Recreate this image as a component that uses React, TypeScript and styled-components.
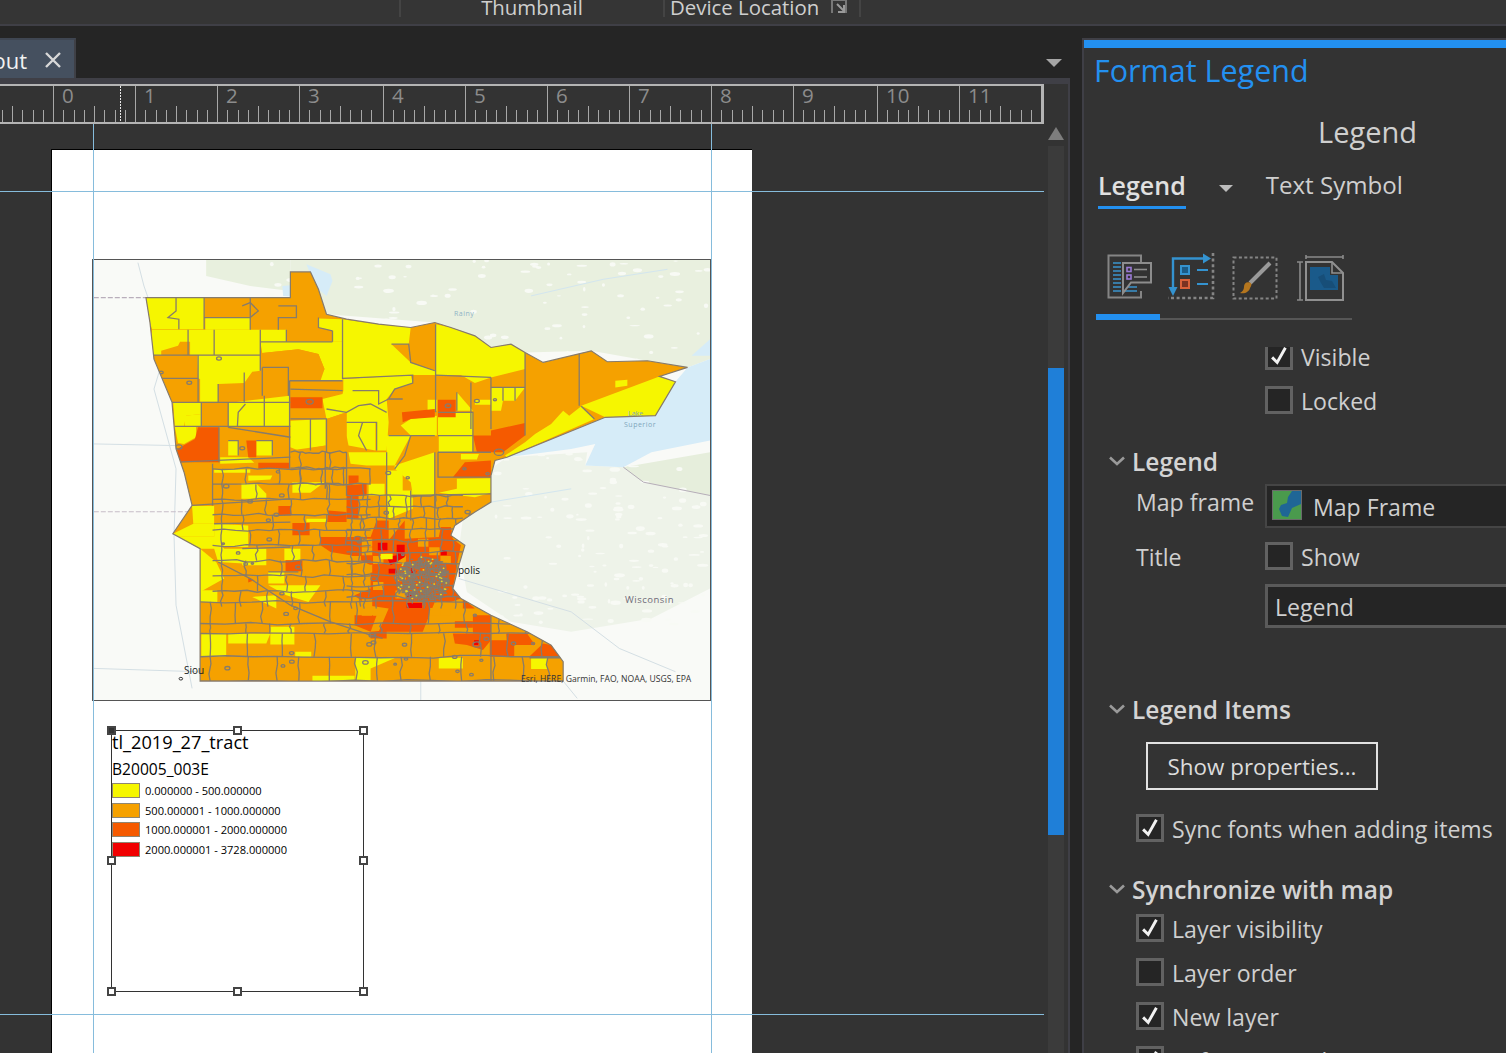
import React from "react";
import styled, { createGlobalStyle } from "styled-components";

const UI_FONT = `"Open Sans", "Noto Sans", sans-serif`;

const GlobalStyle = createGlobalStyle`
  html, body {
    margin: 0;
    padding: 0;
    background: #252525;
    overflow: hidden;
  }
  * {
    box-sizing: border-box;
  }
`;

// seeded so the map is the same on every load
let seed = 20191;
function rnd() {
  seed = (seed * 16807) % 2147483647;
  return seed / 2147483647;
}

function wiggle(x1: number, y1: number, x2: number, y2: number, amp = 3, n = 4) {
  const pts: string[] = [`${x1},${y1}`];
  for (let i = 1; i < n; i++) {
    const t = i / n;
    const x = x1 + (x2 - x1) * t + (rnd() - 0.5) * amp * 2;
    const y = y1 + (y2 - y1) * t + (rnd() - 0.5) * amp * 2;
    pts.push(`${x.toFixed(0)},${y.toFixed(0)}`);
  }
  pts.push(`${x2},${y2}`);
  return pts.join(" ");
}

const STATE =
  "140,125 500,125 500,48 550,48 570,100 590,175 640,190 720,205 800,215 860,200 900,215 960,240 1000,275 1050,265 1085,290 1130,320 1250,285 1290,318 1390,315 1490,335 1420,362 1460,378 1410,480 1285,485 1040,605 1010,615 1000,660 1000,740 960,770 910,810 900,840 935,870 920,930 905,1000 925,1030 1000,1080 1090,1130 1150,1170 1180,1220 1180,1278 275,1278 275,880 207,835 255,750 235,650 215,580 205,440 160,310 150,200";

const YELLOW = [
  "140,125 285,125 285,220 155,220 150,200",
  "288,185 400,185 400,222 288,222",
  "155,222 425,222 425,298 155,298",
  "268,298 425,298 425,345 405,348 385,382 320,385 270,368",
  "275,370 320,370 320,438 275,438",
  "490,258 630,258 630,375 575,375 585,340 570,295 520,280 430,292 425,258",
  "570,188 630,190 630,258 605,258 605,225 570,215",
  "425,222 490,222 490,258 425,258",
  "630,190 720,205 800,215 795,265 752,265 800,320 860,345 862,358 805,358 630,368",
  "862,205 900,215 960,240 1000,275 1050,265 1085,290 1085,340 1000,365 960,382 925,358 862,358",
  "632,370 800,358 805,382 760,400 740,430 745,500 740,585 715,585 715,500 640,500 640,470 590,490 580,430 630,415 632,405",
  "800,490 865,480 865,540 800,540 775,510",
  "868,470 955,470 955,540 868,540",
  "915,410 955,465 915,465",
  "842,432 865,432 865,465 842,465",
  "1000,395 1085,395 1060,435 1030,435 1025,465 1000,465",
  "960,432 1000,432 1000,447 960,447",
  "1310,375 1340,372 1340,390 1310,395",
  "1420,362 1460,378 1410,480 1285,485 1225,450",
  "1225,452 1258,490 1040,605 1035,600 1085,560 1110,535 1150,505 1180,465 1195,480",
  "208,442 278,442 278,475 240,480 235,512 212,512",
  "237,480 278,475 278,512 237,512",
  "212,514 265,514 265,545 235,565 220,562",
  "345,442 498,420 498,512 345,512",
  "500,495 588,490 588,570 520,585 500,575",
  "640,495 712,495 712,585 645,570 640,540",
  "645,590 740,590 740,630 690,630 650,625",
  "740,540 800,540 760,630 740,630",
  "760,630 860,590 860,720 805,718 800,680 760,640",
  "740,645 780,645 780,705 805,705 805,760 745,790 740,720",
  "870,540 955,540 955,590 870,590",
  "925,595 970,595 965,612 925,612",
  "915,670 1000,668 1000,712 960,725 870,712 915,700",
  "345,555 370,555 370,600 345,600",
  "415,555 455,555 455,600 415,600",
  "325,605 395,605 410,622 325,625",
  "310,642 400,642 400,652 310,652",
  "395,660 455,660 450,672 395,676",
  "378,684 415,684 440,715 440,730 378,730",
  "505,680 585,680 550,712 505,712",
  "695,685 735,685 735,720 695,720",
  "255,752 310,752 310,805 258,805",
  "207,835 258,805 310,805 310,843 215,843",
  "210,843 310,843 335,880 395,880 395,925 320,920 310,880 275,880",
  "275,880 315,920 335,970 275,1010",
  "275,1005 318,1005 318,1040 275,1040",
  "310,805 395,810 395,875 310,875",
  "380,880 440,880 440,930 380,930",
  "485,880 525,880 525,915 485,915",
  "445,950 485,950 485,985 445,985",
  "445,990 575,990 545,1040 490,1020",
  "405,1025 465,1020 465,1060",
  "278,1135 340,1135 340,1205 278,1205",
  "345,1135 450,1135 440,1165 345,1165",
  "450,1115 510,1115 510,1168 450,1168",
  "512,1190 552,1190 552,1205 512,1205",
  "662,1208 762,1208 700,1240 700,1278 662,1278",
  "870,1208 930,1208 930,1240 870,1240",
  "1100,1208 1140,1208 1140,1242 1100,1242",
  "555,1262 660,1262 660,1278 555,1278",
  "540,790 590,790 590,800 540,800",
];

// orange put back over the yellow blocks above
const ORANGE = [
  "178,285 220,270 225,258 250,258 250,298 178,298",
  "430,292 520,280 570,295 585,340 570,375 495,375 495,340 430,345",
  "500,585 588,570 588,640 500,640",
  "590,490 640,470 640,590 590,590",
];

const DARK = [
  "500,425 580,425 580,458 500,458",
  "270,515 322,515 322,620 218,620 218,580 262,550",
  "390,555 415,555 415,605 395,605",
  "420,622 498,622 498,640 420,640",
  "778,470 860,460 860,485 800,490 780,500",
  "868,432 912,432 912,485 868,485",
  "955,540 1000,540 1000,525 1085,502 1085,540 1030,590 965,590",
  "905,665 935,620 1000,615 1000,665",
  "645,660 670,660 670,680 645,690",
  "638,690 690,685 690,720 670,720 670,790 640,790 640,720",
  "595,765 640,770 640,800 592,800",
  "470,752 502,752 502,780 470,780",
  "505,803 548,803 548,840 505,840",
  "488,915 530,915 530,948 488,948",
  "575,845 700,845 715,795 745,795 745,855 785,795 785,850 870,845 875,815 900,815 905,850 925,870 915,930 905,1000 925,1030 900,1040 860,1040 830,1130 720,1130 745,1060 690,1050 660,1020 700,1000 700,930 650,900 600,890 575,870",
  "660,1080 715,1080 700,1130 660,1110",
  "700,1130 740,1125 740,1150 700,1150",
  "910,1098 955,1098 955,1118 910,1118",
  "955,1080 1000,1080 1000,1135 955,1135",
  "905,1135 1000,1135 1000,1155 980,1185 940,1170 910,1165",
  "997,1155 1058,1155 1058,1205 997,1205",
  "1038,1135 1090,1135 1110,1170 1040,1170",
  "1095,1205 1130,1165 1150,1170 1172,1205",
  "930,1030 960,1060 930,1060",
  "395,968 410,975 395,982",
];

const RED = [
  "718,862 742,862 742,885 718,885",
  "765,868 785,868 785,905 750,930 740,905 765,900",
  "875,885 890,885 890,900 875,900",
  "790,1043 828,1043 828,1058 790,1058",
  "745,940 765,940 765,955 745,955",
  "800,935 815,950 800,955",
  "795,1010 805,1020 790,1025",
  "958,1155 970,1155 968,1170 958,1170",
];

const HAND_LINES = [
  "285,125 285,220",
  "285,185 400,185",
  "400,125 400,222",
  "470,150 515,150 515,185 470,185 470,222",
  "215,125 215,165 195,185 222,190 222,220",
  "380,150 400,140 420,165 400,185",
  "245,222 245,298",
  "310,222 310,298",
  "425,222 425,345",
  "490,222 490,258",
  "425,258 605,258",
  "605,225 605,258",
  "570,185 570,215 605,225",
  "630,190 630,370",
  "630,368 805,358 805,382 760,400 745,430",
  "752,265 795,265 800,320 860,345",
  "862,205 862,470",
  "862,358 1000,365",
  "1000,365 1000,520",
  "1085,290 1085,540",
  "1220,295 1220,450",
  "1225,452 1258,490",
  "1000,395 1085,395",
  "1030,395 1030,435",
  "1060,395 1060,435",
  "155,298 425,298",
  "270,298 270,440",
  "180,368 270,368",
  "205,440 500,440",
  "320,385 320,440",
  "385,350 385,440",
  "430,335 495,335 495,420",
  "430,335 430,420",
  "345,440 345,515",
  "278,440 278,515",
  "388,445 370,470 368,512",
  "435,420 435,512",
  "212,512 500,512",
  "498,375 498,640",
  "498,375 630,375",
  "500,400 630,405",
  "500,490 590,490 590,590",
  "550,490 550,585",
  "590,460 640,470 670,450 700,445 740,470",
  "655,405 720,405 720,445 745,430",
  "640,500 715,500 715,585",
  "680,500 670,540 690,585",
  "745,540 860,540",
  "800,540 785,600 760,640",
  "868,470 955,470 955,590",
  "868,590 1000,590",
  "868,540 955,540",
  "868,590 868,665 1000,665",
  "915,410 915,465",
  "745,430 780,430",
  "950,380 950,520",
  "322,515 322,620",
  "218,620 500,605",
  "345,555 370,555 370,600",
  "415,555 455,555 455,600",
  "345,515 500,545",
  "306,625 306,750",
  "255,750 500,730",
  "310,805 500,800",
  "640,590 640,720",
  "740,590 740,790",
  "800,705 800,795",
  "860,590 860,845",
  "587,590 587,700",
  "800,720 1000,715",
  "320,920 400,970 500,1050 600,1100 700,1140 730,1150",
  "380,880 500,875",
  "445,950 520,950",
  "1000,1080 1000,1278",
  "1096,1208 1180,1208",
];

const GENERATED_LINES: string[] = [];
const CITY_BLOBS: [number, number, number][] = [];
const ORANGE_CELLS: string[] = [];

function addBand(x0: number, x1: number, y0: number, y1: number, minW: number, maxW: number) {
  GENERATED_LINES.push(wiggle(x0, y0, x1, y0, 4, 14));
  let x = x0 + minW * 0.5;
  while (x < x1) {
    GENERATED_LINES.push(wiggle(Math.round(x), y0, Math.round(x), y1, 4, 3));
    x += minW + rnd() * (maxW - minW);
  }
}

[1040, 1105, 1135, 1205].forEach((y, i, list) => {
  addBand(275, 1180, y, list[i + 1] ?? 1278, 50, 95);
});
addBand(275, 1180, 1278, 1280, 2000, 2000);
for (let y = 640; y < 1040; y += 46) addBand(306, 700, y, y + 46, 46, 95);
for (let y = 720; y < 1040; y += 34) addBand(640, 930, y, y + 34, 26, 44);
for (let y = 590; y < 700; y += 48) addBand(500, 640, y, y + 48, 50, 80);

for (let x = 650; x < 900; x += 28) {
  for (let y = 850; y < 1060; y += 26) {
    const inMetro = Math.hypot((x - 830) / 70, (y - 975) / 75) < 1;
    if (!inMetro && rnd() < 0.3) {
      ORANGE_CELLS.push(`${x},${y} ${x + 26},${y} ${x + 26},${y + 24} ${x},${y + 24}`);
    }
  }
}

for (let i = 0; i < 46; i++) {
  CITY_BLOBS.push([300 + rnd() * 780, 620 + rnd() * 640, 3 + rnd() * 4]);
}
const TOWNS: [number, number, number][] = [
  [322, 308, 6], [178, 350, 5], [248, 381, 6], [548, 438, 9], [222, 574, 8], [380, 578, 6], [340, 692, 7],
  [465, 778, 6], [668, 850, 9], [893, 450, 7], [1020, 590, 12], [965, 436, 6], [1010, 432, 4], [520, 935, 7],
  [703, 1140, 7], [965, 1168, 10], [1105, 1165, 4], [960, 1080, 4],
];

const METRO_LINES: string[] = [];
const METRO_DOTS: [number, number][] = [];
for (let i = 0; i < 560; i++) {
  const a = rnd() * Math.PI * 2;
  const r = Math.sqrt(rnd());
  const x = 828 + Math.cos(a) * r * 66;
  const y = 972 + Math.sin(a) * r * 68;
  const len = 5 + rnd() * 10;
  const horizontal = rnd() < 0.5;
  METRO_LINES.push(
    `${x.toFixed(0)},${y.toFixed(0)} ${(x + (horizontal ? len : 0)).toFixed(0)},${(y + (horizontal ? 0 : len)).toFixed(0)}`,
  );
  if (i % 14 === 0) METRO_DOTS.push([x, y]);
}

const SPECKS: [number, number, number, number][] = [];
for (let i = 0; i < 240; i++) {
  const north = i < 110;
  SPECKS.push([
    north ? 300 + rnd() * 1240 : 1010 + rnd() * 530,
    north ? 14 + rnd() * 300 : 590 + rnd() * 520,
    3 + rnd() * 11,
    2 + rnd() * 5,
  ]);
}

const LAKE =
  "1490,335 1546,310 1546,555 1400,590 1330,635 1235,630 1260,565 1200,580 1040,605 1285,485 1410,480 1460,378";

function MapDrawing() {
  return (
    <MapSvg viewBox="8 12 1538 1323" preserveAspectRatio="none">
      <defs>
        <clipPath id="state-clip">
          <polygon points={STATE} />
        </clipPath>
        <filter id="soft" x="0" y="0" width="100%" height="100%">
          <feGaussianBlur stdDeviation="1.6" />
        </filter>
        <filter id="softer" x="0" y="0" width="100%" height="100%">
          <feGaussianBlur stdDeviation="0.55" />
        </filter>
      </defs>

      <g filter="url(#soft)">
        <rect x="0" y="0" width="1560" height="1350" fill="#f9faf7" />
        <polygon points="290,12 500,12 500,105 400,90 290,60" fill="#e8f0de" />
        <polygon points="500,12 1546,12 1546,310 1490,335 1390,315 1250,285 1085,290 1000,275 860,200 590,175 550,48 500,48" fill="#e9f0df" />
        <polygon points="1000,640 1040,605 1240,590 1235,630 1330,635 1546,600 1546,1000 1400,1090 1200,1130 1050,1100 940,1010 920,880 930,790 1000,740" fill="#eef3e9" />
        <polygon points="1330,635 1546,590 1546,720 1380,680" fill="#e6eedc" />
        {SPECKS.map(([x, y, rx, ry], i) => (
          <ellipse key={i} cx={x} cy={y} rx={rx} ry={ry} fill="#f8faf5" />
        ))}
        <polygon points={LAKE} fill="#d6ecf8" />
        <polygon points="480,90 500,88 500,122 482,120" fill="#d6ecf8" />
        <polygon points="540,25 600,55 605,75 590,120 570,100 555,70" fill="#d6ecf8" />
        <polygon points="1500,300 1546,250 1546,300" fill="#d6ecf8" />
      </g>

      <g fill="none" stroke="#d4dfe4" strokeWidth="1">
        <polyline points="120,20 135,90 190,280 160,400 215,640 210,840 215,1050 255,1300" vectorEffect="non-scaling-stroke" />
        <polyline points="10,565 215,570" vectorEffect="non-scaling-stroke" />
        <polyline points="10,1240 270,1250" vectorEffect="non-scaling-stroke" />
        <polyline points="825,1278 825,1335" vectorEffect="non-scaling-stroke" />
        <polyline points="1180,1278 1215,1330" vectorEffect="non-scaling-stroke" />
        <polyline points="920,970 1200,1070 1320,1180 1460,1250" vectorEffect="non-scaling-stroke" />
        <polyline points="1000,740 1100,720 1200,700" stroke="#d3e6ef" vectorEffect="non-scaling-stroke" />
        <polyline points="1100,120 1280,70 1440,40" stroke="#d3e6ef" vectorEffect="non-scaling-stroke" />
      </g>
      <polyline points="10,125 140,125" fill="none" stroke="#b9aebb" strokeWidth="1.4" strokeDasharray="5 2" vectorEffect="non-scaling-stroke" />
      <polyline points="10,769 255,769" fill="none" stroke="#c6bdc8" strokeWidth="1.2" strokeDasharray="5 2" vectorEffect="non-scaling-stroke" />
      <polyline points="1330,635 1380,680 1546,720" fill="none" stroke="#b5adb8" strokeWidth="1" vectorEffect="non-scaling-stroke" />

      <g filter="url(#softer)">
        <polygon points={STATE} fill="#f5a100" />
        <g clipPath="url(#state-clip)">
          {YELLOW.map((p, i) => (
            <polygon key={i} points={p} fill="#f6f600" />
          ))}
          {ORANGE.map((p, i) => (
            <polygon key={i} points={p} fill="#f5a100" />
          ))}
          {DARK.map((p, i) => (
            <polygon key={i} points={p} fill="#f55a00" />
          ))}
          {ORANGE_CELLS.map((p, i) => (
            <polygon key={i} points={p} fill="#f5a100" />
          ))}
          {RED.map((p, i) => (
            <polygon key={i} points={p} fill="#f00000" />
          ))}
          <polygon points="725,895 755,895 755,912 725,912" fill="#f6f600" />
          <g fill="none" stroke="#867b6c" strokeWidth="1.3">
            {GENERATED_LINES.map((p, i) => (
              <polyline key={i} points={p} vectorEffect="non-scaling-stroke" />
            ))}
            {HAND_LINES.map((p, i) => (
              <polyline key={i} points={p} vectorEffect="non-scaling-stroke" />
            ))}
            {CITY_BLOBS.map(([x, y, r], i) => (
              <ellipse key={i} cx={x} cy={y} rx={r} ry={r * 0.8} vectorEffect="non-scaling-stroke" />
            ))}
            {TOWNS.map(([x, y, r], i) => (
              <ellipse key={i} cx={x} cy={y} rx={r} ry={r * 0.8} vectorEffect="non-scaling-stroke" />
            ))}
            {METRO_LINES.map((p, i) => (
              <polyline key={i} points={p} strokeWidth="1.35" vectorEffect="non-scaling-stroke" />
            ))}
          </g>
          {METRO_DOTS.map(([x, y], i) => (
            <circle key={i} cx={x} cy={y} r="2.5" fill="#e8d820" />
          ))}
        </g>
        <polygon points={STATE} fill="none" stroke="#867b6c" strokeWidth="1.2" vectorEffect="non-scaling-stroke" />
      </g>
      <ellipse cx="227" cy="1271" rx="4.5" ry="4" fill="#fff" stroke="#333" strokeWidth="1" vectorEffect="non-scaling-stroke" />
    </MapSvg>
  );
}

const MINOR_STEP = 10.25;
const INCHES = [53, 135, 217, 299, 383, 465, 547, 629, 711, 793, 877, 959];

function RulerDrawing() {
  const starts = [-29, ...INCHES];
  return (
    <svg width="1041" height="36" viewBox="0 86 1041 36">
      {starts.map((start) => (
        <g key={start} stroke="#a8a8a8" strokeWidth="1">
          {start >= 0 && <line x1={start + 0.5} y1="86" x2={start + 0.5} y2="122" />}
          {[1, 2, 3, 4, 5, 6, 7].map((i) => {
            const x = Math.round(start + i * MINOR_STEP) + 0.5;
            return <line key={i} x1={x} y1={i === 4 ? 106 : 110} x2={x} y2="122" />;
          })}
        </g>
      ))}
      {INCHES.map((start, i) => (
        <text key={start} x={start + 9} y="103" fontFamily={UI_FONT} fontSize="20.5" fill="#8c8c8c">
          {i}
        </text>
      ))}
      <line x1="120.5" y1="86" x2="120.5" y2="122" stroke="#e8e8e8" strokeWidth="1" strokeDasharray="2 1" />
    </svg>
  );
}

function CheckMark() {
  return (
    <svg width="24" height="24" viewBox="0 0 24 24" fill="none">
      <path d="M4.5 13.5 L10 19 L19 3" stroke="#f2f2f2" strokeWidth="3.2" />
    </svg>
  );
}

function Chevron() {
  return (
    <svg width="16" height="10" viewBox="0 0 16 10" fill="none">
      <path d="M1 1.5 L8 8 L15 1.5" stroke="#9a9a9a" strokeWidth="2.6" />
    </svg>
  );
}

function LegendIcon() {
  return (
    <svg width="52" height="52" viewBox="-1 0 52 52" fill="none">
      <path d="M37 17 V5.5 H4.5 V47.5 H37 V41" stroke="#858585" strokeWidth="2" />
      <g stroke="#3a8fc4" strokeWidth="1.6">
        {[13, 17, 21, 25, 29, 33, 37, 41].map((y) => (
          <line key={y} x1="9" y1={y} x2="17" y2={y} />
        ))}
        <line x1="24" y1="37" x2="33" y2="37" />
        <line x1="20" y1="41" x2="33" y2="41" />
      </g>
      <path d="M19 13 H47 V32.5 H27 L19 43 Z" fill="#333" stroke="#8d8d8d" strokeWidth="2" />
      <rect x="23" y="17.5" width="4" height="4" fill="#333" stroke="#9a7ad6" strokeWidth="1.6" />
      <rect x="23" y="25" width="4" height="4" fill="#333" stroke="#9a7ad6" strokeWidth="1.6" />
      <line x1="30" y1="19.5" x2="43" y2="19.5" stroke="#8d8d8d" strokeWidth="1.6" />
      <line x1="30" y1="27" x2="43" y2="27" stroke="#8d8d8d" strokeWidth="1.6" />
    </svg>
  );
}

function ItemsIcon() {
  return (
    <svg width="52" height="52" viewBox="0 0 52 52" fill="none">
      <path d="M47 3 V48 H2" stroke="#858585" strokeWidth="2.6" strokeDasharray="3 2.6" />
      <path d="M7 38 V8.5 H38" stroke="#3493d0" strokeWidth="2.4" />
      <path d="M37 3.5 L45 8.5 L37 13.5 Z" fill="#3493d0" />
      <path d="M2.5 37 H11.5 L7 46 Z" fill="#3493d0" />
      <rect x="15" y="16" width="8" height="8" fill="#1b5b87" stroke="#3493d0" strokeWidth="2" />
      <rect x="15" y="30" width="8" height="8" fill="#7a3222" stroke="#d9613a" strokeWidth="2" />
      <line x1="31" y1="20" x2="42" y2="20" stroke="#3493d0" strokeWidth="2" />
      <line x1="31" y1="34" x2="42" y2="34" stroke="#3493d0" strokeWidth="2" />
    </svg>
  );
}

function BrushIcon() {
  return (
    <svg width="52" height="52" viewBox="0 0 52 52" fill="none">
      <rect x="4.5" y="7.5" width="43" height="41" stroke="#858585" strokeWidth="2" strokeDasharray="3 2.4" />
      <path d="M41 13 L21 33" stroke="#9a9a9a" strokeWidth="4" />
      <path d="M22 33 C18 31 15 33 15 37 C15 40 13 42 11 43 C16 44 20 42 21 38 C22 36 23 35 22 33 Z" fill="#b5761e" />
    </svg>
  );
}

function FrameIcon() {
  return (
    <svg width="52" height="52" viewBox="-2 0 52 52" fill="none">
      <path d="M12 5 V9 M12 7 H49 M49 5 V9" stroke="#8a8a8a" strokeWidth="1.6" />
      <path d="M3 12 H9 M6 12 V50 M3 50 H9" stroke="#8a8a8a" strokeWidth="1.6" />
      <path d="M12 12 H38 L49 23 V50 H12 Z" stroke="#909090" strokeWidth="2" />
      <path d="M38 12 V23 H49" stroke="#909090" strokeWidth="1.6" />
      <path d="M16 17 H36 V25 H44 V40 H16 Z" fill="#1a5a8a" />
      <path d="M24 27 L30 24 L32 30 L38 31 L42 38 L30 38 L27 33 Z" fill="#174e78" />
    </svg>
  );
}

function FrameSwatch() {
  return (
    <svg width="28" height="28" viewBox="0 0 28 28">
      <rect width="28" height="28" fill="#4a9a4d" />
      <path d="M19 0 H28 V13 L19 17 L15 26 L9 25 L6 18 L8 14 L14 12 L15 6 Z" fill="#1f6696" />
    </svg>
  );
}

export default function App() {
  return (
    <>
      <GlobalStyle />
      <Screen>
        <TopBar>
          <TopCell $width={264}>Thumbnail</TopCell>
          <TopCell $width={198} $pad>
            Device Location
            <DialogLauncher width="16" height="15" viewBox="0 0 16 15" fill="none">
              <path d="M1 14 V1 H15 V14" stroke="#777" strokeWidth="2" />
              <path d="M6 5 L13 12 M13 6 V13 H7" stroke="#9a9a9a" strokeWidth="2" />
            </DialogLauncher>
          </TopCell>
        </TopBar>

        <Workspace>
          <LeftColumn>
            <TabStrip>
              <Tab>
                Layout
                <TabClose width="18" height="18" viewBox="0 0 18 18" fill="none">
                  <path d="M2 2 L16 16 M16 2 L2 16" stroke="#d8d8d8" strokeWidth="2.4" />
                </TabClose>
              </Tab>
              <TabMenu />
            </TabStrip>

            <ViewFrame>
              <ViewColumn>
                <Ruler>
                  <RulerDrawing />
                </Ruler>
                <Canvas>
                  <Page>
                    <MapFrame>
                      <MapDrawing />
                      <MapLabel $x={365} $y={304} $size={10} $color="#111">polis</MapLabel>
                      <MapLabel $x={91} $y={404} $size={10} $color="#222">Siou</MapLabel>
                      <MapLabel $x={361} $y={50} $size={7} $color="#8fb3c6" $bold>Rainy</MapLabel>
                      <MapLabel $x={535} $y={150} $size={7} $color="#7fa6bb">Lake</MapLabel>
                      <MapLabel $x={531} $y={161} $size={7} $color="#7fa6bb" $bold>Superior</MapLabel>
                      <MapLabel $x={532} $y={334} $size={9.5} $color="#6f6a78" $bold>Wisconsin</MapLabel>
                      <MapLabel $x={428} $y={414} $size={8.6} $color="#333">
                        Esri, HERE, Garmin, FAO, NOAA, USGS, EPA
                      </MapLabel>
                    </MapFrame>

                    <LegendBox>
                      <Handle $x="left" $y="top" $solid />
                      <Handle $x="mid" $y="top" />
                      <Handle $x="right" $y="top" />
                      <Handle $x="left" $y="mid" />
                      <Handle $x="right" $y="mid" />
                      <Handle $x="left" $y="bottom" />
                      <Handle $x="mid" $y="bottom" />
                      <Handle $x="right" $y="bottom" />
                      <LegendTitle>tl_2019_27_tract</LegendTitle>
                      <LegendField>B20005_003E</LegendField>
                      <LegendRow>
                        <Swatch $color="#f6f600" />
                        0.000000 - 500.000000
                      </LegendRow>
                      <LegendRow>
                        <Swatch $color="#f5a100" />
                        500.000001 - 1000.000000
                      </LegendRow>
                      <LegendRow>
                        <Swatch $color="#f55a00" />
                        1000.000001 - 2000.000000
                      </LegendRow>
                      <LegendRow>
                        <Swatch $color="#f00000" />
                        2000.000001 - 3728.000000
                      </LegendRow>
                    </LegendBox>
                  </Page>
                  <GuideV $x={93} />
                  <GuideV $x={711} />
                  <GuideH $y={67} />
                  <GuideH $y={890} />
                </Canvas>
              </ViewColumn>

              <ScrollColumn>
                <ScrollUp />
                <ScrollTrack>
                  <ScrollThumb />
                </ScrollTrack>
              </ScrollColumn>
            </ViewFrame>
          </LeftColumn>

          <Panel>
            <PanelTitle>Format Legend</PanelTitle>
            <PanelSubject>Legend</PanelSubject>
            <ElementTabs>
              <ElementTab>Legend</ElementTab>
              <TabCaret />
              <ElementOther>Text Symbol</ElementOther>
            </ElementTabs>
            <IconTabs>
              <LegendIcon />
              <ItemsIcon />
              <BrushIcon />
              <FrameIcon />
            </IconTabs>
            <IconTabsRule />

            <PropertyPane>
              <CheckRow $indent={181} $top={-5}>
                <CheckBox $checked>
                  <CheckMark />
                </CheckBox>
                Visible
              </CheckRow>
              <CheckRow $indent={181} $top={16}>
                <CheckBox />
                Locked
              </CheckRow>

              <SectionHead $top={32}>
                <Chevron />
                Legend
              </SectionHead>
              <FieldRow $top={6}>
                <FieldLabel $lineHeight={36}>Map frame</FieldLabel>
                <Combo>
                  <SwatchFrame>
                    <FrameSwatch />
                  </SwatchFrame>
                  Map Frame
                </Combo>
              </FieldRow>
              <FieldRow $top={14}>
                <FieldLabel $lineHeight={30}>Title</FieldLabel>
                <CheckRow $indent={0} $top={0}>
                  <CheckBox />
                  Show
                </CheckRow>
              </FieldRow>
              <TextInput>Legend</TextInput>

              <SectionHead $top={66}>
                <Chevron />
                Legend Items
              </SectionHead>
              <OutlineButton>Show properties...</OutlineButton>
              <CheckRow $indent={52} $top={24}>
                <CheckBox $checked>
                  <CheckMark />
                </CheckBox>
                Sync fonts when adding items
              </CheckRow>

              <SectionHead $top={32}>
                <Chevron />
                Synchronize with map
              </SectionHead>
              <CheckRow $indent={52} $top={8}>
                <CheckBox $checked>
                  <CheckMark />
                </CheckBox>
                Layer visibility
              </CheckRow>
              <CheckRow $indent={52} $top={16}>
                <CheckBox />
                Layer order
              </CheckRow>
              <CheckRow $indent={52} $top={16}>
                <CheckBox $checked>
                  <CheckMark />
                </CheckBox>
                New layer
              </CheckRow>
              <CheckRow $indent={52} $top={16}>
                <CheckBox $checked>
                  <CheckMark />
                </CheckBox>
                Reference scale
              </CheckRow>
            </PropertyPane>
          </Panel>
        </Workspace>
      </Screen>
    </>
  );
}

const Screen = styled.div`
  width: 1506px;
  height: 1053px;
  display: flex;
  flex-direction: column;
  overflow: hidden;
  background: #252525;
  font-family: ${UI_FONT};
`;

const TopBar = styled.div`
  height: 26px;
  flex: none;
  display: flex;
  padding-left: 399px;
  background: #353535;
  border-bottom: 2px solid #3f3f46;
  overflow: hidden;
`;

const TopCell = styled.div<{ $width: number; $pad?: boolean }>`
  width: ${(p) => p.$width}px;
  height: 17px;
  display: flex;
  align-items: center;
  justify-content: ${(p) => (p.$pad ? "flex-start" : "center")};
  padding: 0 0 3px ${(p) => (p.$pad ? 5 : 0)}px;
  border-left: 2px solid #444;
  border-right: ${(p) => (p.$pad ? "2px solid #444" : "0")};
  color: #cfcfcf;
  font-size: 20.4px;
  line-height: 14px;
  white-space: nowrap;
`;

const DialogLauncher = styled.svg`
  margin-left: 12px;
  margin-top: -2px;
  flex: none;
`;

const Workspace = styled.div`
  flex: 1;
  display: flex;
  min-height: 0;
`;

const LeftColumn = styled.div`
  width: 1070px;
  flex: none;
  display: flex;
  flex-direction: column;
`;

const TabStrip = styled.div`
  height: 52px;
  flex: none;
  display: flex;
  justify-content: space-between;
  align-items: flex-end;
`;

const Tab = styled.div`
  width: 76px;
  height: 40px;
  display: flex;
  align-items: center;
  justify-content: flex-end;
  gap: 17px;
  padding: 2px 12px 0 0;
  overflow: hidden;
  white-space: nowrap;
  background: #45505f;
  border-top: 2px solid #3f4652;
  border-right: 2px solid #3f4046;
  color: #f2f2f2;
  font-size: 22px;
`;

const TabClose = styled.svg`
  flex: none;
`;

const TabMenu = styled.div`
  width: 0;
  height: 0;
  margin: 0 8px 11px 0;
  border-left: 8px solid transparent;
  border-right: 8px solid transparent;
  border-top: 8px solid #a6a6a6;
`;

const ViewFrame = styled.div`
  flex: 1;
  min-height: 0;
  display: flex;
  background: #333;
  border-top: 6px solid #3f3f46;
  border-right: 2px solid #3f3f46;
`;

const ViewColumn = styled.div`
  width: 1044px;
  flex: none;
  display: flex;
  flex-direction: column;
`;

const Ruler = styled.div`
  height: 40px;
  flex: none;
  display: flex;
  background: #333;
  border-top: 2px solid #b4b4b4;
  border-bottom: 2px solid #b4b4b4;
  border-right: 3px solid #b4b4b4;
`;

const Canvas = styled.div`
  position: relative;
  flex: 1;
  min-height: 0;
  overflow: hidden;
  background: #333;
  padding: 25px 0 0 51px;
`;

const Page = styled.div`
  width: 701px;
  height: 1000px;
  padding: 109px 0 0 40px;
  background: #fff;
  border-top: 1px solid #000;
  border-left: 1px solid #000;
`;

const MapFrame = styled.div`
  position: relative;
  width: 619px;
  height: 442px;
  border: 1px solid #555;
  overflow: hidden;
`;

const MapSvg = styled.svg`
  display: block;
  width: 100%;
  height: 100%;
`;

const MapLabel = styled.span<{ $x: number; $y: number; $size: number; $color: string; $bold?: boolean }>`
  position: absolute;
  left: ${(p) => p.$x}px;
  top: ${(p) => p.$y}px;
  color: ${(p) => p.$color};
  font-size: ${(p) => p.$size}px;
  letter-spacing: ${(p) => (p.$bold ? "0.5px" : "0")};
  line-height: 1.2;
  white-space: nowrap;
`;

const LegendBox = styled.div`
  position: relative;
  width: 253px;
  height: 262px;
  margin: 29px 0 0 19px;
  border: 1.5px solid #333;
  color: #000;
`;

const HANDLE_X = { left: "-5px", mid: "calc(50% - 5px)", right: "calc(100% - 4px)" };
const HANDLE_Y = { top: "-5px", mid: "calc(50% - 5px)", bottom: "calc(100% - 4px)" };

const Handle = styled.i<{ $x: keyof typeof HANDLE_X; $y: keyof typeof HANDLE_Y; $solid?: boolean }>`
  position: absolute;
  left: ${(p) => HANDLE_X[p.$x]};
  top: ${(p) => HANDLE_Y[p.$y]};
  width: 9px;
  height: 9px;
  background: ${(p) => (p.$solid ? "#333" : "#fff")};
  border: 2px solid #444;
`;

const LegendTitle = styled.div`
  font-size: 18.2px;
  line-height: 24px;
  margin-top: -1px;
`;

const LegendField = styled.div`
  font-size: 15.6px;
  line-height: 22px;
  margin: 4px 0 1px;
`;

const LegendRow = styled.div`
  display: flex;
  align-items: center;
  gap: 5px;
  height: 19.6px;
  font-size: 11.1px;
  white-space: nowrap;
`;

const Swatch = styled.span<{ $color: string }>`
  width: 28px;
  height: 15px;
  background: ${(p) => p.$color};
  border: 1px solid #8f8672;
`;

const GuideV = styled.div<{ $x: number }>`
  position: absolute;
  top: 0;
  bottom: 0;
  left: ${(p) => p.$x}px;
  width: 1px;
  background: #86bcdc;
`;

const GuideH = styled.div<{ $y: number }>`
  position: absolute;
  left: 0;
  right: 0;
  top: ${(p) => p.$y}px;
  height: 1px;
  background: #86bcdc;
`;

const ScrollColumn = styled.div`
  width: 24px;
  flex: none;
  display: flex;
  flex-direction: column;
  align-items: center;
  padding-top: 43px;
`;

const ScrollUp = styled.div`
  width: 0;
  height: 0;
  flex: none;
  border-left: 8px solid transparent;
  border-right: 8px solid transparent;
  border-bottom: 13px solid #7d7d7d;
`;

const ScrollTrack = styled.div`
  width: 16px;
  flex: 1;
  margin-top: 6px;
  padding-top: 222px;
  background: #3b3b3b;
`;

const ScrollThumb = styled.div`
  height: 467px;
  background: #1f7fd8;
`;

const Panel = styled.section`
  flex: 1;
  min-width: 0;
  margin: 12px 0 0 12px;
  display: flex;
  flex-direction: column;
  overflow: hidden;
  background: #333;
  border-left: 2px solid #3f3f46;
  border-top: 2px solid #3f3f46;
  color: #cfcfcf;
`;

const PanelTitle = styled.h1`
  margin: 0;
  flex: none;
  height: 54px;
  padding: 0 0 0 10px;
  border-top: 8px solid #2390f0;
  color: #2390f0;
  font-size: 30.5px;
  font-weight: 400;
  line-height: 44px;
`;

const PanelSubject = styled.div`
  flex: none;
  height: 42px;
  margin-top: 18px;
  padding-right: 89px;
  text-align: right;
  font-size: 29px;
  line-height: 40px;
`;

const ElementTabs = styled.div`
  flex: none;
  height: 45px;
  margin-top: 10px;
  padding-left: 14px;
  display: flex;
  align-items: flex-start;
`;

const ElementTab = styled.div`
  height: 45px;
  padding-top: 1px;
  border-bottom: 3px solid #2390f0;
  color: #e0e0e0;
  font-size: 25px;
  font-weight: 600;
  line-height: 40px;
`;

const TabCaret = styled.div`
  width: 0;
  height: 0;
  margin: 21px 33px 0 33px;
  border-left: 7px solid transparent;
  border-right: 7px solid transparent;
  border-top: 7px solid #bcbcbc;
`;

const ElementOther = styled.div`
  padding-top: 1px;
  font-size: 24.1px;
  line-height: 40px;
`;

const IconTabs = styled.div`
  flex: none;
  display: flex;
  gap: 11px;
  height: 52px;
  margin-top: 41px;
  padding-left: 19px;
`;

const IconTabsRule = styled.div`
  flex: none;
  position: relative;
  width: 256px;
  height: 2px;
  margin: 16px 0 0 12px;
  background: #565656;

  &::before {
    content: "";
    position: absolute;
    left: 0;
    top: -4px;
    width: 64px;
    height: 6px;
    background: #2390f0;
  }
`;

const PropertyPane = styled.div`
  flex: 1;
  min-height: 0;
  margin-top: 27px;
  overflow: hidden;
  font-size: 23.1px;
`;

const CheckRow = styled.div<{ $indent: number; $top: number }>`
  display: flex;
  align-items: center;
  gap: 8px;
  height: 28px;
  padding-top: 2px;
  margin: ${(p) => p.$top}px 0 0 ${(p) => p.$indent}px;
  white-space: nowrap;
`;

const CheckBox = styled.span<{ $checked?: boolean }>`
  width: 28px;
  height: 28px;
  flex: none;
  display: flex;
  align-items: center;
  justify-content: center;
  margin-top: -2px;
  background: #252525;
  border: 3px solid #626262;
`;

const SectionHead = styled.div<{ $top: number }>`
  display: flex;
  align-items: center;
  gap: 7px;
  height: 32px;
  padding-bottom: 2px;
  margin: ${(p) => p.$top}px 0 0 25px;
  color: #d4d4d4;
  font-size: 24.5px;
  font-weight: 600;
`;

const FieldRow = styled.div<{ $top: number }>`
  display: flex;
  align-items: flex-start;
  margin-top: ${(p) => p.$top}px;
  padding-left: 52px;
  white-space: nowrap;
`;

const FieldLabel = styled.div<{ $lineHeight: number }>`
  width: 129px;
  flex: none;
  height: 28px;
  line-height: ${(p) => p.$lineHeight}px;
`;

const Combo = styled.div`
  flex: none;
  width: 280px;
  height: 44px;
  display: flex;
  align-items: center;
  gap: 11px;
  padding: 2px 0 0 5px;
  background: #252525;
  border: 2px solid #454545;
`;

const SwatchFrame = styled.span`
  width: 30px;
  height: 30px;
  margin-top: -4px;
  border: 1px solid #6a6a6a;
`;

const TextInput = styled.div`
  width: 280px;
  height: 44px;
  margin: 14px 0 0 181px;
  padding-left: 7px;
  background: #252525;
  border: 3px solid #5a5a5a;
  line-height: 40px;
`;

const OutlineButton = styled.div`
  width: 232px;
  height: 48px;
  margin: 16px 0 0 62px;
  border: 2px solid #e2e2e2;
  color: #dcdcdc;
  font-size: 22.4px;
  line-height: 46px;
  text-align: center;
`;
